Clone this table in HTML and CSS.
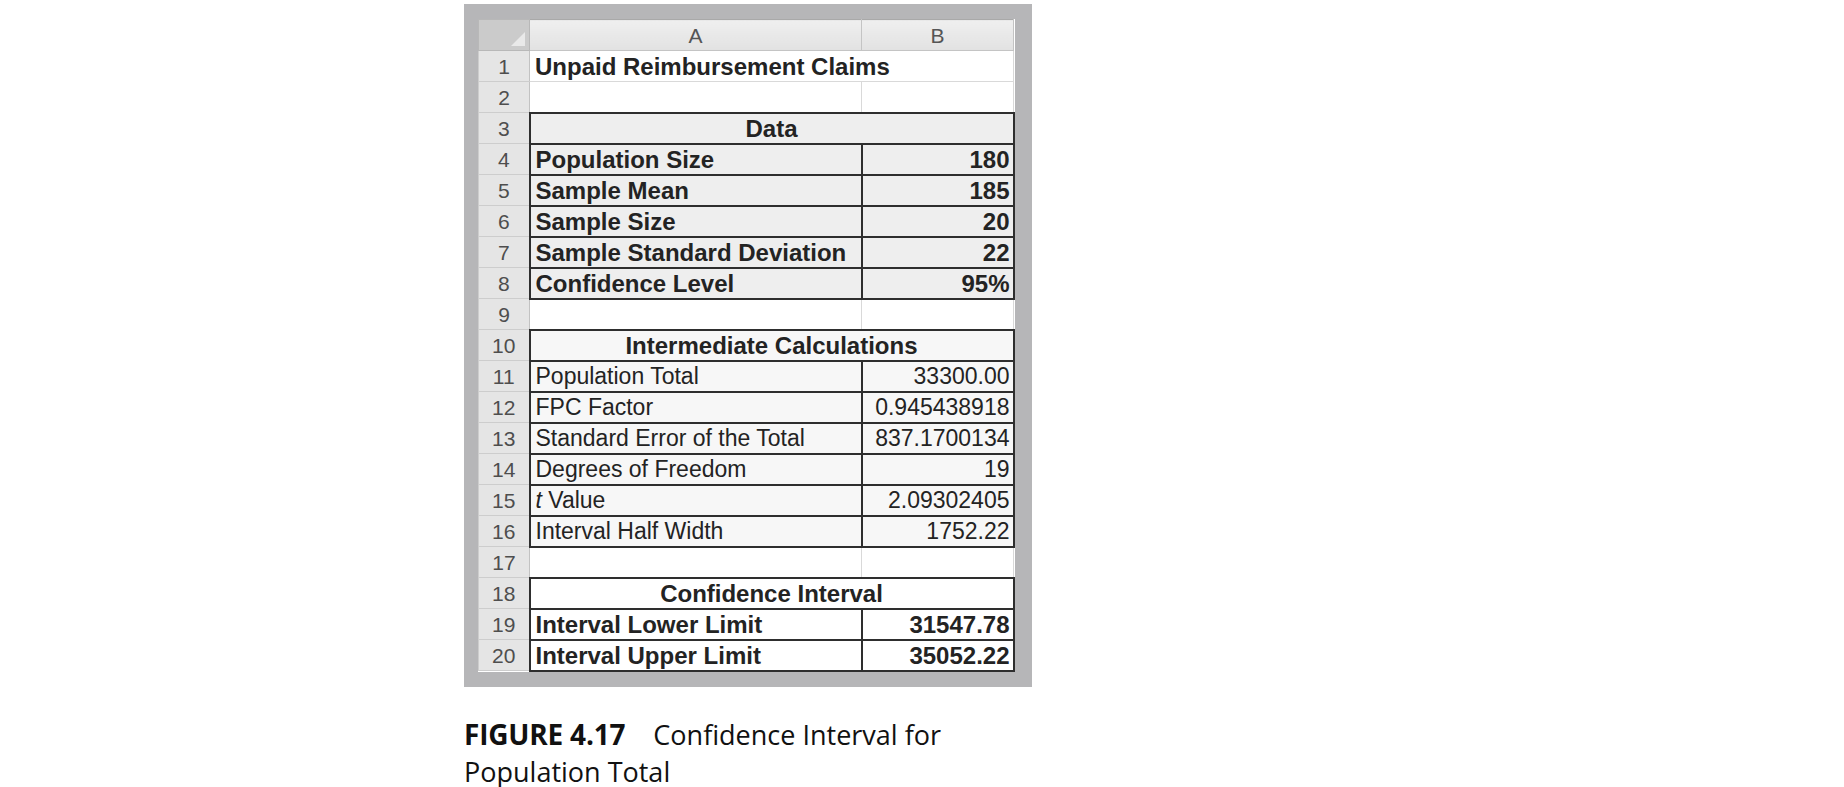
FILE: index.html
```html
<!DOCTYPE html>
<html>
<head>
<meta charset="utf-8">
<link rel="stylesheet" href="styles.css">
</head>
<body>
<div class="page">
  <figure class="figure">
    <div class="frame">
      <table class="sheet">
        <colgroup><col class="c-num"><col class="c-a"><col class="c-b"></colgroup>
        <thead>
          <tr><th class="corner"><span class="tri"></span></th><th class="colh">A</th><th class="colh">B</th></tr>
        </thead>
        <tbody>
          <tr><td class="rn">1</td><td class="b over" colspan="2">Unpaid Reimbursement Claims</td></tr>
          <tr><td class="rn">2</td><td></td><td></td></tr>
          <tr class="shade"><td class="rn">3</td><td class="box b ctr" colspan="2">Data</td></tr>
          <tr class="shade"><td class="rn">4</td><td class="box b">Population Size</td><td class="box b num">180</td></tr>
          <tr class="shade"><td class="rn">5</td><td class="box b">Sample Mean</td><td class="box b num">185</td></tr>
          <tr class="shade"><td class="rn">6</td><td class="box b">Sample Size</td><td class="box b num">20</td></tr>
          <tr class="shade"><td class="rn">7</td><td class="box b">Sample Standard Deviation</td><td class="box b num">22</td></tr>
          <tr class="shade"><td class="rn">8</td><td class="box b">Confidence Level</td><td class="box b num">95%</td></tr>
          <tr><td class="rn">9</td><td></td><td></td></tr>
          <tr class="light"><td class="rn">10</td><td class="box b ctr" colspan="2">Intermediate Calculations</td></tr>
          <tr class="light"><td class="rn">11</td><td class="box">Population Total</td><td class="box num">33300.00</td></tr>
          <tr class="light"><td class="rn">12</td><td class="box">FPC Factor</td><td class="box num">0.945438918</td></tr>
          <tr class="light"><td class="rn">13</td><td class="box">Standard Error of the Total</td><td class="box num">837.1700134</td></tr>
          <tr class="light"><td class="rn">14</td><td class="box">Degrees of Freedom</td><td class="box num">19</td></tr>
          <tr class="light"><td class="rn">15</td><td class="box"><i>t</i> Value</td><td class="box num">2.09302405</td></tr>
          <tr class="light"><td class="rn">16</td><td class="box">Interval Half Width</td><td class="box num">1752.22</td></tr>
          <tr><td class="rn">17</td><td></td><td></td></tr>
          <tr><td class="rn">18</td><td class="box b ctr" colspan="2">Confidence Interval</td></tr>
          <tr><td class="rn">19</td><td class="box b">Interval Lower Limit</td><td class="box b num">31547.78</td></tr>
          <tr><td class="rn">20</td><td class="box b">Interval Upper Limit</td><td class="box b num">35052.22</td></tr>
        </tbody>
      </table>
    </div>
    <figcaption class="caption"><span class="fig-label">FIGURE 4.17</span> Confidence Interval for Population Total</figcaption>
  </figure>
</div>
</body>
</html>
```

FILE: styles.css
```css
html, body {
  margin: 0;
  padding: 0;
  background: #ffffff;
}

.page {
  padding: 4px 0 0 464px;
}

.figure {
  margin: 0;
  display: flex;
  flex-direction: column;
  align-items: flex-start;
}

.frame {
  background: #b6b6b8;
  padding: 15px 17px 15px 14px;
}

.sheet {
  border-collapse: collapse;
  table-layout: fixed;
  width: 535px;
  background: #ffffff;
  font-family: "Liberation Sans", Arial, sans-serif;
  color: #232323;
}

.c-num { width: 51px; }
.c-a { width: 332px; }
.c-b { width: 152px; }

.sheet th,
.sheet td {
  height: 31px;
  padding: 0;
  box-sizing: border-box;
  border: 1px solid #d9d9d9;
  white-space: nowrap;
  overflow: visible;
  line-height: 29px;
}

.sheet thead th {
  height: 31px;
  background: linear-gradient(#efefef, #e2e2e2);
  border: 1px solid #c4c4c4;
  border-top: 1px solid #a9a9a9;
  font-weight: normal;
  font-size: 21px;
  color: #555555;
  text-align: center;
}

.sheet thead th.corner {
  background: #cbcbcb;
  position: relative;
  border-color: #b8b8b8;
}

.tri {
  position: absolute;
  right: 4px;
  bottom: 4px;
  width: 0;
  height: 0;
  border-left: 14px solid transparent;
  border-bottom: 14px solid #e9e9e9;
}

.sheet td.rn {
  background: #e5e5e5;
  border-color: #cdcdcd;
  border-right: 1px solid #c2c2c2;
  text-align: center;
  font-size: 21px;
  color: #4e4e4e;
}

.sheet td {
  font-size: 23px;
  padding-left: 5px;
}

.sheet td.rn { padding-left: 0; }

.sheet td.b {
  font-weight: bold;
  font-size: 24px;
}

.sheet td.over {
  border-right-color: #d9d9d9;
}

.sheet td.ctr {
  text-align: center;
  padding-left: 0;
}

.sheet td.num {
  text-align: right;
  padding-left: 0;
  padding-right: 3px;
}

.sheet td.box {
  border: 2px solid #2e2e2e;
}

.shade td:not(.rn) { background: #eeeeee; }
.light td:not(.rn) { background: #f7f7f7; }

.caption {
  margin-top: 29px;
  width: 540px;
  font-family: "Open Sans", "Noto Sans", sans-serif;
  font-size: 27px;
  line-height: 37px;
  color: #111111;
}

.fig-label {
  font-weight: bold;
  font-size: 28px;
  margin-right: 21px;
  letter-spacing: -0.2px;
}
```
